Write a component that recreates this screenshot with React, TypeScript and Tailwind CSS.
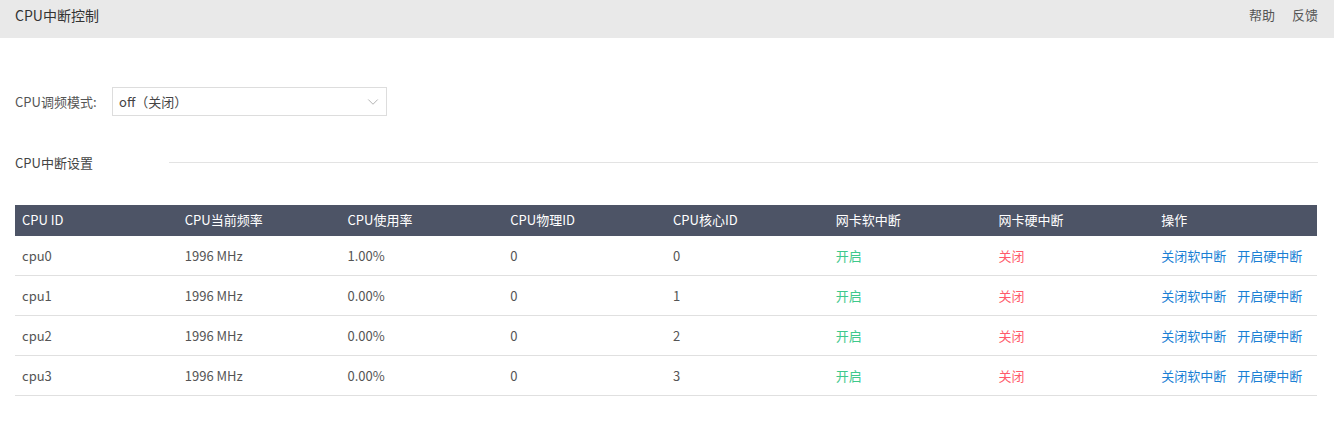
import { ChevronDown } from "lucide-react";

const rows = [
  { id: "cpu0", freq: "1996 MHz", usage: "1.00%", phys: "0", core: "0" },
  { id: "cpu1", freq: "1996 MHz", usage: "0.00%", phys: "0", core: "1" },
  { id: "cpu2", freq: "1996 MHz", usage: "0.00%", phys: "0", core: "2" },
  { id: "cpu3", freq: "1996 MHz", usage: "0.00%", phys: "0", core: "3" },
];

const headers = ["CPU ID", "CPU当前频率", "CPU使用率", "CPU物理ID", "CPU核心ID", "网卡软中断", "网卡硬中断", "操作"];

export default function App() {
  return (
    <div
      className="min-h-[427px] bg-white text-[13px] text-[#555]"
      style={{ fontFamily: '"Microsoft YaHei", "Noto Sans CJK SC", sans-serif' }}
    >
      {/* Top bar */}
      <div className="flex h-[38px] items-start justify-between bg-[#e9e9e9] px-[15px] pt-[5px]">
        <span className="text-[14px] text-[#333]">CPU中断控制</span>
        <div className="flex gap-[17px] pr-[1px] text-[13px] text-[#555]">
          <span>帮助</span>
          <span>反馈</span>
        </div>
      </div>

      <div className="pl-[15px] pr-[16px] pt-[49px]">
        {/* Mode select */}
        <div className="flex items-center">
          <span className="w-[97px]">CPU调频模式:</span>
          <div className="flex h-[29px] w-[275px] items-center justify-between border border-[#ddd] bg-white pl-[6px] pr-[4px] text-[#444]">
            <span>off（关闭）</span>
            <ChevronDown size={18} strokeWidth={1} className="text-[#999]" />
          </div>
        </div>

        {/* Section title */}
        <div className="mt-[37px] flex items-center">
          <span className="w-[154px] text-[#444]">CPU中断设置</span>
          <div className="h-px flex-1 bg-[#e3e3e3]" />
        </div>

        {/* Table */}
        <table className="mt-[32px] w-[1302px] table-fixed border-collapse">
          <thead>
            <tr className="h-[31px] bg-[#4d5466] text-left text-white">
              {headers.map((h) => (
                <th key={h} className="pl-[7px] font-normal">
                  {h}
                </th>
              ))}
            </tr>
          </thead>
          <tbody>
            {rows.map((r) => (
              <tr key={r.id} className="h-[40px] border-b border-[#e0e0e0]">
                <td className="pl-[7px]">{r.id}</td>
                <td className="pl-[7px]">{r.freq}</td>
                <td className="pl-[7px]">{r.usage}</td>
                <td className="pl-[7px]">{r.phys}</td>
                <td className="pl-[7px]">{r.core}</td>
                <td className="pl-[7px] text-[#3ec98b]">开启</td>
                <td className="pl-[7px] text-[#ff5a6a]">关闭</td>
                <td className="pl-[7px] text-[#1a7fd4]">
                  <span className="cursor-pointer">关闭软中断</span>
                  <span className="ml-[11px] cursor-pointer">开启硬中断</span>
                </td>
              </tr>
            ))}
          </tbody>
        </table>
      </div>
    </div>
  );
}
